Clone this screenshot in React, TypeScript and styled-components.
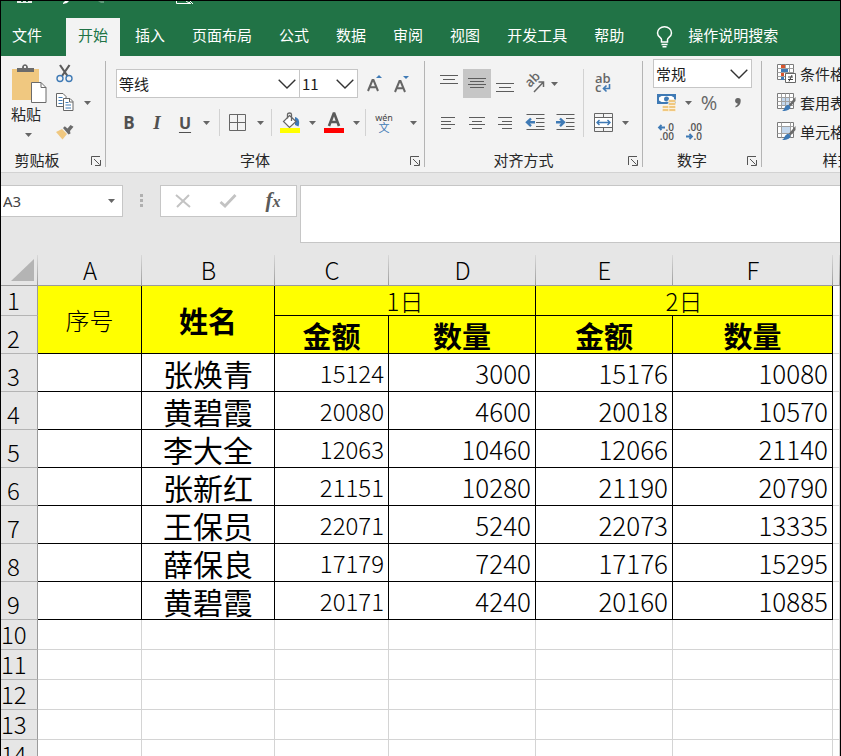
import React from "react";
import styled, { createGlobalStyle, css } from "styled-components";

const GREEN = "#217346";
const INK = "#666666";
const BLUE = "#3f7ab5";
const LINE = "#c6c6c6";

const GlobalStyle = createGlobalStyle`
  *, *::before, *::after { box-sizing: border-box; }
  body {
    margin: 0;
    font-family: "Noto Sans CJK SC", "Noto Sans", sans-serif;
    font-size: 15px;
    color: #262626;
  }
  button, input, select, textarea { font: inherit; color: inherit; }
  svg { display: block; flex: none; overflow: visible; }
`;

const Window = styled.div`
  display: flex;
  flex-direction: column;
  height: 100vh;
  overflow: hidden;
  border: 1px solid #000;
  border-bottom: 0;
  background: #e6e6e6;
`;

/* ---------- title strip and tabs ---------- */

const Header = styled.header`
  flex: none;
  background: ${GREEN};
  color: #fff;
`;

const QuickAccess = styled.div`
  height: 17px;
  overflow: hidden;
`;

const TabBar = styled.nav`
  display: flex;
  gap: 3px;
  height: 38px;
`;

const Tab = styled.button<{ $active?: boolean; $file?: boolean }>`
  flex: none;
  border: 0;
  padding: 0 12px 5px;
  margin-right: ${(p) => (p.$file ? "9px" : "0")};
  padding-left: ${(p) => (p.$file ? "11px" : "12px")};
  line-height: 20px;
  white-space: nowrap;
  background: ${(p) => (p.$active ? "#f3f3f3" : "transparent")};
  color: ${(p) => (p.$active ? GREEN : "#fff")};
`;

const TellMe = styled.button`
  display: flex;
  flex: none;
  align-items: center;
  gap: 15px;
  margin-left: 17px;
  padding: 0 0 5px;
  border: 0;
  background: transparent;
  color: #fff;
  line-height: 20px;
  white-space: nowrap;
  & > svg { margin-top: 4px; }
`;

/* ---------- ribbon ---------- */

const Ribbon = styled.div`
  display: flex;
  flex: none;
  height: 117px;
  overflow: hidden;
  background: #f3f3f3;
  border-bottom: 1px solid #d2d2d2;
`;

const Group = styled.section`
  display: flex;
  flex: none;
  flex-direction: column;
  justify-content: space-between;
`;

const GroupFooter = styled.div<{ $reserve: number }>`
  position: relative;
  height: 22px;
  padding-right: ${(p) => p.$reserve}px;
  line-height: 20px;
  text-align: center;
`;

const Launcher = styled.button`
  position: absolute;
  right: 4px;
  top: 6px;
  padding: 0;
  border: 0;
  background: transparent;
`;

const GroupRule = styled.div`
  flex: none;
  width: 1px;
  margin: 5px 0;
  background: #b4b4b4;
`;

const ToolRows = styled.div`
  display: flex;
  flex-direction: column;
  gap: 10px;
  padding: 13px 0 0 10px;
`;

const NumberRows = styled.div`
  display: flex;
  flex-direction: column;
  padding: 3px 9px 0 10px;
`;

const ToolRow = styled.div`
  display: flex;
  align-items: center;
  height: 29px;
`;

const Tool = styled.button<{ $w: number; $pressed?: boolean }>`
  display: flex;
  flex: none;
  align-items: center;
  justify-content: center;
  width: ${(p) => p.$w}px;
  height: 29px;
  padding: 0;
  border: 0;
  line-height: 20px;
  background: ${(p) => (p.$pressed ? "#c6c6c6" : "transparent")};
  color: ${INK};
`;

const Letter = styled.span<{ $kind: "b" | "i" | "u" | "pct" }>`
  font-family: "Open Sans", sans-serif;
  font-size: 17px;
  color: #505050;
  ${(p) => p.$kind === "b" && css`font-weight: 700;`}
  ${(p) => p.$kind === "i" && css`
    font-family: "Liberation Serif", serif;
    font-style: italic;
    font-weight: 700;
    font-size: 19px;
  `}
  ${(p) => p.$kind === "u" && css`
    font-size: 16px;
    font-weight: 700;
    text-decoration: underline;
    text-underline-offset: 3px;
  `}
  ${(p) => p.$kind === "pct" && css`font-size: 20px; color: ${INK};`}
`;

const Rule = styled.div`
  flex: none;
  width: 1px;
  height: 27px;
  margin-left: 5px;
  background: #d2d2d2;
`;

const TallRule = styled.div`
  width: 1px;
  height: 68px;
  margin: 13px 0 0 4px;
  background: #d2d2d2;
`;

const SplitBody = styled.div`
  display: flex;
`;

const SideRows = styled.div`
  display: flex;
  flex-direction: column;
  gap: 10px;
  width: 58px;
  padding-top: 13px;
`;

const SelectBox = styled.div<{ $w: number; $joined?: boolean }>`
  display: grid;
  flex: none;
  width: ${(p) => p.$w}px;
  height: 29px;
  align-items: center;
  border: 1px solid ${LINE};
  border-left-width: ${(p) => (p.$joined ? "0" : "1px")};
  background: #fff;
  color: #1c1c1c;
  & > * { grid-area: 1 / 1; }
  & > svg { justify-self: end; margin-right: 3px; pointer-events: none; }
`;

const Select = styled.select`
  width: 100%;
  height: 100%;
  padding: 0 24px 0 2px;
  border: 0;
  appearance: none;
  background: transparent;
`;

const ClipBody = styled.div`
  display: flex;
  width: 104px;
  padding: 3px 0 0 10px;
`;

const PasteButton = styled.button`
  display: flex;
  flex-direction: column;
  width: 36px;
  margin-top: 5px;
  padding: 0;
  border: 0;
  background: transparent;
  text-align: left;
  line-height: 20px;
  & > svg:last-child { margin: 9px 0 0 14px; }
`;

const ClipTools = styled.div`
  display: flex;
  flex-direction: column;
  margin-left: 5px;
`;

const StyleRows = styled.div`
  display: flex;
  flex-direction: column;
  padding: 3px 12px 0 15px;
`;

const StyleButton = styled.button`
  display: flex;
  align-items: center;
  gap: 4px;
  height: 29px;
  padding: 0;
  border: 0;
  background: transparent;
  line-height: 20px;
  white-space: nowrap;
`;

/* ---------- formula bar ---------- */

const FormulaBar = styled.div`
  display: flex;
  flex: none;
  align-items: flex-start;
  padding: 12px 0;
`;

const NameBox = styled.div`
  display: flex;
  flex: none;
  align-items: center;
  width: 122px;
  height: 32px;
  padding-right: 6px;
  border: 1px solid ${LINE};
  border-left: 0;
  background: #fff;
`;

const NameInput = styled.input`
  flex: 1;
  min-width: 0;
  padding: 0 2px;
  border: 0;
  background: transparent;
  font-family: "Noto Sans", sans-serif;
  color: #444;
`;

const Grip = styled.div`
  flex: none;
  width: 37px;
  padding: 9px 0 0 17px;
`;

const FormulaTools = styled.div`
  display: flex;
  flex: none;
  align-items: center;
  width: 137px;
  height: 32px;
  border: 1px solid ${LINE};
  background: #fff;
`;

const FormulaInput = styled.textarea`
  flex: 1;
  min-width: 0;
  height: 58px;
  margin-left: 3px;
  padding: 4px;
  border: 1px solid ${LINE};
  border-right: 0;
  resize: none;
  background: #fff;
`;

const FxText = styled.span`
  font-family: "Liberation Serif", serif;
  font-style: italic;
  font-weight: 700;
  font-size: 21px;
  color: #5a5a5a;
  & > small { font-size: 16px; }
`;

/* ---------- sheet ---------- */

const SheetArea = styled.main`
  flex: 1;
  min-height: 0;
  overflow: hidden;
`;

const Sheet = styled.table`
  width: 100%;
  table-layout: fixed;
  border-spacing: 0;
  background: #fff;
  color: #000;
`;

const Col = styled.col<{ $w?: number }>`
  width: ${(p) => (p.$w ? `${p.$w}px` : "auto")};
`;

const Row = styled.tr<{ $h: number }>`
  height: ${(p) => p.$h}px;
`;

const ColHead = styled.th`
  padding: 0 0 3px;
  overflow: hidden;
  border-bottom: 1px solid #9b9b9b;
  background: linear-gradient(#d8d8d8, #9b9b9b) right / 1px 100% no-repeat #e6e6e6;
  font-size: 24px;
  font-weight: 300;
  line-height: 24px;
  vertical-align: bottom;
  & > svg { margin-left: 10px; }
`;

const RowHead = styled.th`
  padding: 0 11px 3px 0;
  border-right: 1px solid #9b9b9b;
  border-bottom: 1px solid #b4b4b4;
  background: #e6e6e6;
  font-size: 24px;
  font-weight: 300;
  line-height: 24px;
  vertical-align: bottom;
`;

type Kind = "title" | "name" | "number" | "small";

const Cell = styled.td<{ $ruled?: boolean; $fill?: boolean; $kind?: Kind }>`
  padding: 0;
  border-right: 1px solid ${(p) => (p.$ruled ? "#000" : "#d4d4d4")};
  border-bottom: 1px solid ${(p) => (p.$ruled ? "#000" : "#d4d4d4")};
  background: ${(p) => (p.$fill ? "#ffff00" : "#fff")};
  font-size: 24px;
  font-weight: 300;
  line-height: 1;
  text-align: center;
  white-space: nowrap;
  ${(p) => p.$kind === "title" && css`font-size: 29px; font-weight: 700; padding-top: 2px;`}
  ${(p) => p.$kind === "name" && css`font-size: 30px; font-weight: 400;`}
  ${(p) => p.$kind === "number" && css`font-size: 26px; text-align: right; padding-right: 4px;`}
  ${(p) => p.$kind === "small" && css`font-size: 24px; text-align: right; padding-right: 4px;`}
`;

/* ---------- icons ---------- */

const Caret = () => (
  <svg width="7" height="4" viewBox="0 0 7 4"><path d="M0 0h7L3.5 4z" fill={INK} /></svg>
);

const Chevron = () => (
  <svg width="18" height="10" viewBox="0 0 18 10"><path d="M.7.7 9 9 17.300.7" fill="none" stroke="#333" strokeWidth="1.4" /></svg>
);

const LauncherIcon = () => (
  <svg width="10" height="10" viewBox="0 0 10 10" fill="none" stroke="#555">
    <path d="M.5 9V.5H9M3 3l5.500 5.500M9.500 4v5.500H4" />
  </svg>
);

const QuickIcons = () => (
  <svg width="200" height="4" viewBox="0 0 200 4">
    <path d="M16 0h15v2H16z" fill="#e4eee8" />
    <path d="M20 0h2v1h-2zM25 0h2v1h-2z" fill={GREEN} />
    <path d="M64 0h4l-2 2-4 1V2z" fill="#fff" />
    <path d="M97 0h6v2h-3z" fill="#5f9a7a" />
    <path d="M175.500 0v2.500H190M185 0l3 2 2-2M189 0l3 3" fill="none" stroke="#fff" />
  </svg>
);

const Bulb = () => (
  <svg width="17" height="22" viewBox="0 0 17 22" fill="none" stroke="#fff" strokeWidth="1.500">
    <path d="M5.500 16v-2.500C5.500 11.500 1.500 11 1.500 7a7 6.300 0 0 1 14 0c0 4-4 4.500-4 6.500V16zM5.500 18.500h6M6.500 20.700h4" />
  </svg>
);

const PasteIcon = () => (
  <svg width="36" height="40" viewBox="0 0 36 40">
    <path d="M1 5h27v31H1z" fill="#f0c880" />
    <path d="M6 8V4h5c0-5 6-5 6 0h6v4z" fill="#6b6b6b" />
    <path d="M13 2h2v2h-2z" fill="#f3f3f3" />
    <path d="M20.500 18.500H30l5 5V38.500H20.500z" fill="#fff" stroke="#6b6b6b" />
    <path d="M30 18.500v5h5" fill="none" stroke="#6b6b6b" />
  </svg>
);

const CutIcon = () => (
  <svg width="18" height="19" viewBox="0 0 18 19" fill="none">
    <path d="m4 1 7.500 11M13.500 1 6 12" stroke="#5c5c5c" strokeWidth="2.200" />
    <circle cx="4" cy="14.500" r="3" stroke={BLUE} strokeWidth="1.400" />
    <circle cx="13" cy="14.500" r="3" stroke={BLUE} strokeWidth="1.400" />
  </svg>
);

const CopyIcon = () => (
  <svg width="18" height="19" viewBox="0 0 18 19">
    <path d="M.5.500H7l3 3v10H.5z" fill="#fff" stroke={INK} />
    <path d="M2.500 4.500h4m-4 3h4m-4 3h4" stroke={BLUE} />
    <path d="M7.500 5.500H14l3 3v9H7.500z" fill="#fff" stroke={INK} />
    <path d="M13.500 5.500V9H17" fill="none" stroke={INK} />
    <path d="M9.500 9.500h3m-3 2.500H15m-5.500 3H15" stroke={BLUE} />
  </svg>
);

const BrushIcon = () => (
  <svg width="18" height="16" viewBox="0 0 18 16">
    <path d="m0 8 6-3 5 5-4.500 5.500z" fill="#f0c880" />
    <path d="m7 4 1.800-1.800L11.500 4.500 14.500 1 17.500 2.800 14 7l.5 2.500-2 1z" fill="#6b6b6b" />
  </svg>
);

const GrowFont = ({ down }: { down?: boolean }) => (
  <svg width="18" height="20" viewBox="0 0 18 20">
    <path d={down ? "m2 18 4.500-11h1L12 18M4 14.200h6" : "m2 17 4.500-11h1L12 17M4 13.200h6"} fill="none" stroke={INK} strokeWidth="2" />
    <path d={down ? "M10 2h6l-3 3z" : "M10 4h6l-3-3z"} fill={BLUE} />
  </svg>
);

const BordersIcon = () => (
  <svg width="17" height="17" viewBox="0 0 17 17" fill="none" stroke={INK}>
    <path d="M.5.500h16v16H.5zM8.500.500v16M.5 8.500h16" />
  </svg>
);

const FillIcon = () => (
  <svg width="20" height="21" viewBox="0 0 20 21">
    <path d="M15 5c4 1 5 5 3.500 9.500L15 13z" fill={BLUE} />
    <path d="m9.500 3.500 6.500 6-6.500 6-6-6z" fill="#fff" stroke={INK} strokeWidth="1.200" />
    <path d="M7.500 6.500v-4c0-2 4-2 4 0V9" fill="none" stroke={INK} strokeWidth="1.300" />
    <path d="M0 16h20v5H0z" fill="#ff0" />
  </svg>
);

const FontColorIcon = () => (
  <svg width="20" height="21" viewBox="0 0 20 21">
    <path d="M5 14 9.700 1.500h.6L15 14M6.800 10h6.500" fill="none" stroke="#5a5a5a" strokeWidth="2.600" />
    <path d="M0 16h20v5H0z" fill="#f00" />
  </svg>
);

const PinyinIcon = () => (
  <svg width="20" height="22" viewBox="0 0 20 22">
    <text x="10" y="9" textAnchor="middle" fontFamily="Noto Sans, sans-serif" fontSize="9" fill="#444">wén</text>
    <text x="10" y="20" textAnchor="middle" fontFamily="Noto Sans CJK SC, sans-serif" fontSize="11" fill={BLUE}>文</text>
  </svg>
);

const Lines = ({ w, h, d }: { w: number; h: number; d: string }) => (
  <svg width={w} height={h} viewBox={`0 0 ${w} ${h}`}><path d={d} stroke="#5c5c5c" fill="none" /></svg>
);

const OrientIcon = () => (
  <svg width="20" height="20" viewBox="0 0 20 20">
    <text x="5" y="14" transform="rotate(-45 5 14)" fontFamily="Open Sans, sans-serif" fontSize="13" fontWeight="600" fill={INK}>ab</text>
    <path d="M9 18 18 8.500M13.500 8H18.500v5" fill="none" stroke={INK} strokeWidth="1.500" />
  </svg>
);

const WrapIcon = () => (
  <svg width="18" height="22" viewBox="0 0 18 22">
    <text x="1" y="10" fontFamily="Open Sans, sans-serif" fontSize="13" fontWeight="600" fill={INK}>ab</text>
    <text x="1" y="19" fontFamily="Open Sans, sans-serif" fontSize="13" fontWeight="600" fill={INK}>c</text>
    <path d="M15.500 11v4.500H9.500M12.500 12.500l-3 3 3 3" fill="none" stroke={BLUE} strokeWidth="1.600" />
  </svg>
);

const IndentIcon = ({ right }: { right?: boolean }) => (
  <svg width="19" height="17" viewBox="0 0 19 17" fill="none">
    <path d="M.5.500h18M10 4.500h8.500M10 8.500h8.500M10 12.500h8.500M.5 15.500h18" stroke="#5c5c5c" />
    <path d={right ? "M0 8.300h7M4 4.500l4 3.800-4 3.800" : "M9 8.300H2M5 4.500 1 8.300l4 3.800"} stroke={BLUE} strokeWidth="2.400" />
  </svg>
);

const MergeIcon = () => (
  <svg width="19" height="19" viewBox="0 0 19 19" fill="none">
    <path d="M.5.500h18v18H.5zM.5 4.500h18M.5 14.500h18M9.500.500v4M9.500 14.500v4" stroke={INK} />
    <path d="M1 5h17v9H1z" fill="#fff" />
    <path d="M3 9.500h13M5.500 7 3 9.500 5.500 12M13.500 7l2.500 2.500-2.500 2.500" stroke={BLUE} strokeWidth="1.400" />
  </svg>
);

const MoneyIcon = () => (
  <svg width="20" height="20" viewBox="0 0 20 20">
    <path d="M0 1h19v10H0z" fill={BLUE} />
    <path d="M2 4.500 4.500 3h10L17 4.500v3L14.500 9h-10L2 7.500z" fill="#fff" />
    <circle cx="9.500" cy="6" r="2.500" fill={BLUE} />
    <g fill="#f0c880" stroke="#fff" strokeWidth=".6">
      <rect x="11" y="6.500" width="8" height="3" rx="1.500" /><rect x="11" y="9.500" width="8" height="3" rx="1.500" />
      <rect x="11" y="12.500" width="8" height="3" rx="1.500" /><rect x="11" y="15.500" width="8" height="3" rx="1.500" />
      <rect x="5" y="12.500" width="7" height="3" rx="1.500" /><rect x="5" y="15.500" width="7" height="3" rx="1.500" />
    </g>
  </svg>
);

const CommaIcon = () => (
  <svg width="8" height="12" viewBox="0 0 8 12">
    <path d="M4 1a2.700 2.700 0 0 1 2.700 3C6.700 7 5 9.500 1.500 10.500V9C3 8.500 3.600 7.500 3.700 6.500A2.700 2.700 0 1 1 4 1z" fill={INK} />
  </svg>
);

const DecimalIcon = ({ less }: { less?: boolean }) => (
  <svg width="18" height="20" viewBox="0 0 18 20">
    <g fontFamily="Open Sans, sans-serif" fontSize="10" fontWeight="600" fill="#555" textAnchor="end">
      <text x="16" y="9">{less ? ".00" : ".0"}</text>
      <text x="16" y="18">{less ? ".0" : ".00"}</text>
    </g>
    <path d={less ? "M0 14.500h6M3.500 12l2.500 2.500L3.500 17" : "M7 5.500H1M3.500 3 1 5.500 3.500 8"} fill="none" stroke={BLUE} strokeWidth="1.800" />
  </svg>
);

const GridBase = () => (
  <>
    <path d="M.5.500h16v15H.5z" fill="#fff" stroke="#7a7a7a" />
    <path d="M.5 4.500h16M.5 8.500h16M.5 12.500h16M4.500.500v15M8.500.500v15M12.500.500v15" stroke="#a0a0a0" />
  </>
);

const CondIcon = () => (
  <svg width="19" height="19" viewBox="0 0 19 19" fill="none">
    <GridBase />
    <path d="M4 1h4v3H4zM4 9h3v3H4z" fill="#d9532c" />
    <path d="M4 5h7v3H4zM4 13h3v3H4z" fill={BLUE} />
    <path d="M8.500 9.500h10v9h-10z" fill="#fff" stroke={INK} />
    <path d="M11 13h5M11 15.500h5M15 11l-3 6.500" stroke="#444" />
  </svg>
);

const Brush = () => (
  <>
    <path d="m18.500 4-7 8 2 1.500L18.500 8z" fill="#6b6b6b" />
    <path d="M9.500 12.500c2-1.500 5 1 3.500 3S8.500 18 5 18c2.500-1 2-4 4.500-5.500z" fill={BLUE} />
  </>
);

const TableStyleIcon = () => (
  <svg width="19" height="19" viewBox="0 0 19 19" fill="none">
    <GridBase />
    <path d="M5 5h3v3H5zM9 5h3v3H9zM5 9h3v3H5zM9 9h3v3H9z" fill="#c5d9ee" />
    <Brush />
  </svg>
);

const CellStyleIcon = () => (
  <svg width="19" height="19" viewBox="0 0 19 19" fill="none">
    <path d="M.5.500h16v15H.5z" fill="#fff" stroke="#7a7a7a" />
    <path d="M4.500.500v15M.5 4.500h16M.5 11.500h16M13.500.500v15" stroke="#a0a0a0" />
    <path d="M5 5h8v6H5z" fill="#c5d9ee" />
    <Brush />
  </svg>
);

const GripIcon = () => (
  <svg width="4" height="13" viewBox="0 0 4 13"><path d="M0 0h3v3H0zM0 5h3v3H0zM0 10h3v3H0z" fill="#b0b0b0" /></svg>
);

const CancelIcon = () => (
  <svg width="16" height="14" viewBox="0 0 16 14"><path d="m1 1 14 12M14 1 2 13" fill="none" stroke="#c3c3c3" strokeWidth="2" /></svg>
);

const EnterIcon = () => (
  <svg width="18" height="14" viewBox="0 0 18 14"><path d="m1.500 8 4.500 4L16.500 1" fill="none" stroke="#c3c3c3" strokeWidth="2.800" /></svg>
);

const CornerIcon = () => (
  <svg width="24" height="24" viewBox="0 0 24 24"><path d="M23 1v22H0z" fill="#b4b4b4" /></svg>
);

/* ---------- data ---------- */

const TABS = ["文件", "开始", "插入", "页面布局", "公式", "数据", "审阅", "视图", "开发工具", "帮助"];
const COLUMNS = ["A", "B", "C", "D", "E", "F", ""];
const WIDTHS = [37, 104, 133, 114, 147, 137, 160];
const RECORDS: [string, number, number, number, number][] = [
  ["张焕青", 15124, 3000, 15176, 10080],
  ["黄碧霞", 20080, 4600, 20018, 10570],
  ["李大全", 12063, 10460, 12066, 21140],
  ["张新红", 21151, 10280, 21190, 20790],
  ["王保员", 22071, 5240, 22073, 13335],
  ["薛保良", 17179, 7240, 17176, 15295],
  ["黄碧霞", 20171, 4240, 20160, 10885],
];
const EMPTY_ROWS = [10, 11, 12, 13, 14];

/* ---------- ribbon groups ---------- */

const CaretButton = ({ w, label }: { w: number; label: string }) => (
  <Tool $w={w} aria-label={label}><Caret /></Tool>
);

const Footer = ({ name, reserve = 20 }: { name: string; reserve?: number }) => (
  <GroupFooter $reserve={reserve}>
    {name}
    <Launcher aria-label={`${name}设置`}><LauncherIcon /></Launcher>
  </GroupFooter>
);

const ClipboardGroup = () => (
  <Group>
    <ClipBody>
      <PasteButton>
        <PasteIcon />
        粘贴
        <Caret />
      </PasteButton>
      <ClipTools>
        <ToolRow><Tool $w={26} aria-label="剪切"><CutIcon /></Tool></ToolRow>
        <ToolRow><Tool $w={26} aria-label="复制"><CopyIcon /></Tool><CaretButton w={18} label="复制选项" /></ToolRow>
        <ToolRow><Tool $w={26} aria-label="格式刷"><BrushIcon /></Tool></ToolRow>
      </ClipTools>
    </ClipBody>
    <Footer name="剪贴板" reserve={32} />
  </Group>
);

const FontGroup = () => (
  <Group>
    <ToolRows>
      <ToolRow>
        <SelectBox $w={184}>
          <Select aria-label="字体"><option>等线</option></Select>
          <Chevron />
        </SelectBox>
        <SelectBox $w={58} $joined>
          <Select aria-label="字号"><option>11</option></Select>
          <Chevron />
        </SelectBox>
        <Tool $w={34} aria-label="增大字号"><GrowFont /></Tool>
        <Tool $w={20} aria-label="减小字号"><GrowFont down /></Tool>
      </ToolRow>
      <ToolRow>
        <Tool $w={26} aria-label="加粗"><Letter $kind="b">B</Letter></Tool>
        <Tool $w={30} aria-label="倾斜"><Letter $kind="i">I</Letter></Tool>
        <Tool $w={26} aria-label="下划线"><Letter $kind="u">U</Letter></Tool>
        <CaretButton w={16} label="下划线选项" />
        <Rule />
        <Tool $w={34} aria-label="边框"><BordersIcon /></Tool>
        <CaretButton w={12} label="边框选项" />
        <Rule />
        <Tool $w={36} aria-label="填充颜色"><FillIcon /></Tool>
        <CaretButton w={8} label="填充颜色选项" />
        <Tool $w={36} aria-label="字体颜色"><FontColorIcon /></Tool>
        <CaretButton w={8} label="字体颜色选项" />
        <Rule />
        <Tool $w={36} aria-label="拼音"><PinyinIcon /></Tool>
        <CaretButton w={22} label="拼音选项" />
      </ToolRow>
    </ToolRows>
    <Footer name="字体" />
  </Group>
);

const AlignGroup = () => (
  <Group>
    <SplitBody>
      <ToolRows>
        <ToolRow>
          <Tool $w={28} aria-label="顶端对齐"><Lines w={18} h={18} d="M0 .5h18M3 4.500h12M0 8.500h18" /></Tool>
          <Tool $w={28} $pressed aria-label="垂直居中"><Lines w={18} h={11} d="M0 .5h18M2 3.500h14M0 6.500h18M2 9.500h14" /></Tool>
          <Tool $w={28} aria-label="底端对齐"><Lines w={18} h={18} d="M0 8.500h18M3 12.500h12M0 16.500h18" /></Tool>
          <Tool $w={32} aria-label="方向"><OrientIcon /></Tool>
          <CaretButton w={6} label="方向选项" />
        </ToolRow>
        <ToolRow>
          <Tool $w={28} aria-label="左对齐"><Lines w={16} h={12} d="M0 .5h14M0 4.500h10M0 7.500h14M0 11.500h10" /></Tool>
          <Tool $w={28} aria-label="居中"><Lines w={16} h={12} d="M0 .5h16M3 4.500h10M0 7.500h16M3 11.500h10" /></Tool>
          <Tool $w={28} aria-label="右对齐"><Lines w={16} h={12} d="M1 .5h14M5 4.500h10M1 7.500h14M5 11.500h10" /></Tool>
          <Tool $w={32} aria-label="减少缩进量"><IndentIcon /></Tool>
          <Tool $w={28} aria-label="增加缩进量"><IndentIcon right /></Tool>
        </ToolRow>
      </ToolRows>
      <TallRule />
      <SideRows>
        <ToolRow><Tool $w={38} aria-label="自动换行"><WrapIcon /></Tool></ToolRow>
        <ToolRow>
          <Tool $w={38} aria-label="合并后居中"><MergeIcon /></Tool>
          <CaretButton w={6} label="合并选项" />
        </ToolRow>
      </SideRows>
    </SplitBody>
    <Footer name="对齐方式" />
  </Group>
);

const NumberGroup = () => (
  <Group>
    <NumberRows>
      <SelectBox $w={99}>
        <Select aria-label="数字格式"><option>常规</option></Select>
        <Chevron />
      </SelectBox>
      <ToolRow>
        <Tool $w={28} aria-label="会计数字格式"><MoneyIcon /></Tool>
        <CaretButton w={14} label="货币选项" />
        <Tool $w={28} aria-label="百分比样式"><Letter $kind="pct">%</Letter></Tool>
        <Tool $w={29} aria-label="千位分隔样式"><CommaIcon /></Tool>
      </ToolRow>
      <ToolRow>
        <Tool $w={28} aria-label="增加小数位数"><DecimalIcon /></Tool>
        <Tool $w={28} aria-label="减少小数位数"><DecimalIcon less /></Tool>
      </ToolRow>
    </NumberRows>
    <Footer name="数字" />
  </Group>
);

const StylesGroup = () => (
  <Group>
    <StyleRows>
      <StyleButton><CondIcon />条件格式<Caret /></StyleButton>
      <StyleButton><TableStyleIcon />套用表格格式<Caret /></StyleButton>
      <StyleButton><CellStyleIcon />单元格样式<Caret /></StyleButton>
    </StyleRows>
    <GroupFooter $reserve={0}>样式</GroupFooter>
  </Group>
);

const Worksheet = () => (
  <Sheet>
    <colgroup>
      {WIDTHS.map((w, i) => <Col key={i} $w={w} />)}
      <Col />
    </colgroup>
    <thead>
      <Row $h={31}>
        <ColHead><CornerIcon /></ColHead>
        {COLUMNS.map((c, i) => <ColHead key={i} scope="col">{c}</ColHead>)}
      </Row>
    </thead>
    <tbody>
      <Row $h={30}>
        <RowHead scope="row">1</RowHead>
        <Cell $ruled $fill rowSpan={2}>序号</Cell>
        <Cell $ruled $fill $kind="title" rowSpan={2}>姓名</Cell>
        <Cell $ruled $fill colSpan={2}>1日</Cell>
        <Cell $ruled $fill colSpan={2}>2日</Cell>
        <Cell />
      </Row>
      <Row $h={38}>
        <RowHead scope="row">2</RowHead>
        {["金额", "数量", "金额", "数量"].map((t, i) => (
          <Cell key={i} $ruled $fill $kind="title">{t}</Cell>
        ))}
        <Cell />
      </Row>
      {RECORDS.map(([name, ...values], r) => (
        <Row key={r} $h={38}>
          <RowHead scope="row">{r + 3}</RowHead>
          <Cell $ruled />
          <Cell $ruled $kind="name">{name}</Cell>
          {values.map((v, i) => (
            <Cell key={i} $ruled $kind={i === 0 ? "small" : "number"}>{v}</Cell>
          ))}
          <Cell />
        </Row>
      ))}
      {EMPTY_ROWS.map((n) => (
        <Row key={n} $h={30}>
          <RowHead scope="row">{n}</RowHead>
          {COLUMNS.map((_, i) => <Cell key={i} />)}
        </Row>
      ))}
    </tbody>
  </Sheet>
);

export default function App() {
  return (
    <>
      <GlobalStyle />
      <Window>
        <Header>
          <QuickAccess><QuickIcons /></QuickAccess>
          <TabBar>
            {TABS.map((t, i) => (
              <Tab key={t} $file={i === 0} $active={i === 1}>{t}</Tab>
            ))}
            <TellMe><Bulb />操作说明搜索</TellMe>
          </TabBar>
        </Header>
        <Ribbon>
          <ClipboardGroup />
          <GroupRule />
          <FontGroup />
          <GroupRule />
          <AlignGroup />
          <GroupRule />
          <NumberGroup />
          <GroupRule />
          <StylesGroup />
        </Ribbon>
        <FormulaBar>
          <NameBox>
            <NameInput aria-label="名称框" defaultValue="A3" />
            <CaretButton w={9} label="名称列表" />
          </NameBox>
          <Grip><GripIcon /></Grip>
          <FormulaTools>
            <Tool $w={44} aria-label="取消"><CancelIcon /></Tool>
            <Tool $w={46} aria-label="输入"><EnterIcon /></Tool>
            <Tool $w={44} aria-label="插入函数"><FxText>f<small>x</small></FxText></Tool>
          </FormulaTools>
          <FormulaInput aria-label="编辑栏" />
        </FormulaBar>
        <SheetArea>
          <Worksheet />
        </SheetArea>
      </Window>
    </>
  );
}
